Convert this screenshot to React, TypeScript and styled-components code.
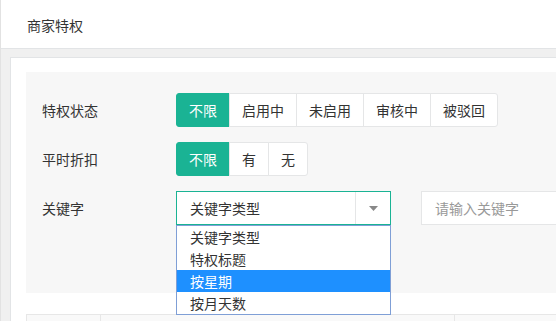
import { createGlobalStyle, styled } from "styled-components";

const GlobalStyle = createGlobalStyle`
  html, body {
    margin: 0;
    padding: 0;
    background: #f0f0f0;
    overflow: hidden;
  }
  body {
    font-family: "Noto Sans CJK SC", "Noto Sans", sans-serif;
    color: #333333;
    font-size: 14px;
  }
`;

const statusOptions = ["不限", "启用中", "未启用", "审核中", "被驳回"];
const discountOptions = ["不限", "有", "无"];
const keywordTypes = ["关键字类型", "特权标题", "按星期", "按月天数"];

export default function App() {
  return (
    <>
      <GlobalStyle />
      <Page>
        <Header>商家特权</Header>
        <Band>
          <Card>
            <FilterPanel>
              <Row>
                <Label>特权状态</Label>
                <ButtonGroup>
                  {statusOptions.map((opt, i) => (
                    <GroupButton key={opt} $active={i === 0}>
                      {opt}
                    </GroupButton>
                  ))}
                </ButtonGroup>
              </Row>
              <Row>
                <Label>平时折扣</Label>
                <ButtonGroup>
                  {discountOptions.map((opt, i) => (
                    <GroupButton key={opt} $active={i === 0}>
                      {opt}
                    </GroupButton>
                  ))}
                </ButtonGroup>
              </Row>
              <Row>
                <Label>关键字</Label>
                <SelectWrap>
                  <Select>
                    <SelectValue>关键字类型</SelectValue>
                    <SelectArrow>
                      <svg width="9" height="5" viewBox="0 0 9 5">
                        <path d="M0 0 L9 0 L4.5 5 Z" fill="#888888" />
                      </svg>
                    </SelectArrow>
                  </Select>
                  <Dropdown>
                    {keywordTypes.map((t, i) => (
                      <Option key={t} $highlight={i === 2}>
                        {t}
                      </Option>
                    ))}
                  </Dropdown>
                </SelectWrap>
                <KeywordInput placeholder="请输入关键字" />
              </Row>
            </FilterPanel>
            <Table>
              <HeadCell $width={73} />
              <HeadCell $width={353} />
              <HeadCell />
            </Table>
          </Card>
        </Band>
      </Page>
    </>
  );
}

const Page = styled.div`
  width: 556px;
  height: 321px;
  border-left: 1px solid #e2e2e2;
  box-sizing: border-box;
  display: flex;
  flex-direction: column;
  overflow: hidden;
`;

const Header = styled.div`
  height: 49px;
  background: #ffffff;
  border-bottom: 1px solid #e2e4e6;
  display: flex;
  align-items: center;
  padding-left: 26px;
  padding-top: 1px;
  box-sizing: border-box;
  font-size: 14px;
  color: #333333;
  flex-shrink: 0;
`;

const Band = styled.div`
  flex: 1;
  background: #f0f0f0;
  padding: 8px 0 0 9px;
  display: flex;
`;

const Card = styled.div`
  flex: 1;
  background: #ffffff;
  border-left: 1px solid #e2e4e6;
  border-top: 1px solid #e2e4e6;
  padding: 14px 0 0 15px;
  display: flex;
  flex-direction: column;
  gap: 21px;
`;

const FilterPanel = styled.div`
  background: #f7f7f7;
  height: 221px;
  box-sizing: border-box;
  padding: 21px 0 0 16px;
  display: flex;
  flex-direction: column;
  gap: 15px;
`;

const Row = styled.div`
  display: flex;
  align-items: center;
  height: 34px;
`;

const Label = styled.div`
  width: 134px;
  font-size: 14px;
  color: #333333;
  flex-shrink: 0;
`;

const ButtonGroup = styled.div`
  display: flex;
  height: 34px;
`;

const GroupButton = styled.button<{ $active?: boolean }>`
  height: 34px;
  padding: 0 12px;
  margin-left: -1px;
  font-family: inherit;
  font-size: 14px;
  border: 1px solid ${(p) => (p.$active ? "#1ab394" : "#e5e6e7")};
  background: ${(p) => (p.$active ? "#1ab394" : "#ffffff")};
  color: ${(p) => (p.$active ? "#ffffff" : "#333333")};
  cursor: pointer;
  outline: none;

  &:first-child {
    margin-left: 0;
    border-radius: 3px 0 0 3px;
  }
  &:last-child {
    border-radius: 0 3px 3px 0;
  }
`;

const SelectWrap = styled.div`
  position: relative;
  width: 215px;
  height: 34px;
  margin-right: 30px;
`;

const Select = styled.div`
  height: 34px;
  box-sizing: border-box;
  border: 1px solid #1ab394;
  background: #ffffff;
  display: flex;
  align-items: center;
`;

const SelectValue = styled.div`
  flex: 1;
  padding-left: 13px;
  font-size: 14px;
  color: #333333;
`;

const SelectArrow = styled.div`
  width: 34px;
  height: 100%;
  border-left: 1px solid #e5e6e7;
  display: flex;
  align-items: center;
  justify-content: center;
`;

const Dropdown = styled.div`
  position: absolute;
  top: 34px;
  left: 0;
  width: 215px;
  box-sizing: border-box;
  border: 1px solid #7f9fd6;
  background: #ffffff;
  z-index: 2;
`;

const Option = styled.div<{ $highlight?: boolean }>`
  height: 22px;
  line-height: 22px;
  padding-left: 13px;
  font-size: 14px;
  background: ${(p) => (p.$highlight ? "#1e90ff" : "#ffffff")};
  color: ${(p) => (p.$highlight ? "#ffffff" : "#333333")};
`;

const KeywordInput = styled.input`
  width: 160px;
  height: 34px;
  box-sizing: border-box;
  border: 1px solid #e5e6e7;
  background: #ffffff;
  padding: 0 13px;
  font-family: inherit;
  font-size: 14px;
  outline: none;
  flex-shrink: 0;

  &::placeholder {
    color: #999999;
  }
`;

const Table = styled.div`
  display: flex;
  height: 30px;
  border-top: 1px solid #e7e7e7;
  border-left: 1px solid #e7e7e7;
  background: #f9f9f9;
`;

const HeadCell = styled.div<{ $width?: number }>`
  width: ${(p) => (p.$width ? `${p.$width}px` : "auto")};
  flex: ${(p) => (p.$width ? "none" : "1")};
  border-right: 1px solid #e7e7e7;
`;
